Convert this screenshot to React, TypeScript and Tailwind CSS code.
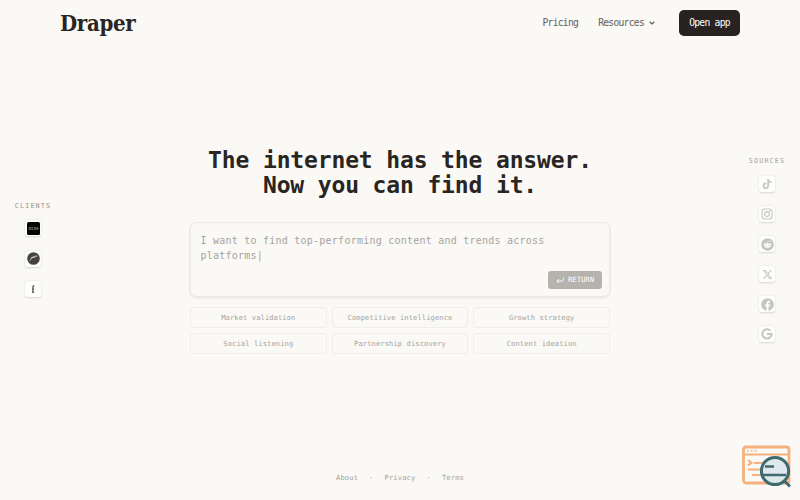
import type { ReactNode } from 'react'
import { ChevronDown } from 'lucide-react'
import { FaFacebook, FaReddit, FaTiktok } from 'react-icons/fa'
import { FaXTwitter } from 'react-icons/fa6'

const suggestions = [
  'Market validation',
  'Competitive intelligence',
  'Growth strategy',
  'Social listening',
  'Partnership discovery',
  'Content ideation',
]

function Tile({ children }: { children: ReactNode }) {
  return (
    <div className="flex h-4 w-4 items-center justify-center rounded-[3px] bg-[#fefefd] shadow-[0_0.5px_2px_rgba(40,35,30,0.16)]">
      {children}
    </div>
  )
}

function Header() {
  return (
    <header className="flex h-[46px] shrink-0 items-center justify-between px-[60px]">
      <div className="font-['DejaVu_Serif'] text-[22px] leading-none font-bold tracking-[-0.3px] [font-stretch:condensed]">
        Draper
      </div>
      <nav className="flex items-center text-[9.7px] tracking-[-0.74px] text-[#65615d]">
        <a className="mr-5">Pricing</a>
        <a className="mr-[23px] flex items-center gap-1">
          Resources
          <ChevronDown className="h-2 w-2" strokeWidth={3.5} />
        </a>
        <button className="h-[26px] w-[61px] rounded-[5px] bg-[#282320] text-white">Open app</button>
      </nav>
    </header>
  )
}

function Clients() {
  return (
    <aside className="flex w-[66px] flex-col items-center self-start pt-[155px]">
      <h2 className="text-[6.8px] leading-[10px] tracking-[1.1px] text-[#96938f]">CLIENTS</h2>
      <div className="mt-[9px] flex flex-col gap-[14.5px]">
        <Tile>
          <svg viewBox="0 0 26 26" className="h-[13px] w-[13px]">
            <rect width="26" height="26" rx="3" fill="#050505" />
            <path
              d="M4 11h4v4H4zM13 11h-3v4h3M15 15v-4h3v4zM20 15v-4l2 4v-4"
              fill="none"
              stroke="#aaa"
              strokeWidth="1"
            />
          </svg>
        </Tile>
        <Tile>
          <svg viewBox="0 0 26 26" className="h-[13px] w-[13px]">
            <circle cx="13" cy="13" r="12.6" fill="#444341" />
            <path d="M6 17C8 11 13 8 21 8M8 12l9-2" fill="none" stroke="#dddbd8" strokeWidth="1.6" />
          </svg>
        </Tile>
        <Tile>
          <svg viewBox="0 0 16 16" className="h-4 w-4" fill="none" stroke="#686765">
            <path d="M9.3 4.7H8.5L7.8 6.4v4.8h1.4M7.2 8h1.8" strokeWidth="1.4" />
          </svg>
        </Tile>
      </div>
    </aside>
  )
}

function Sources() {
  return (
    <aside className="flex w-[66px] flex-col items-center self-start pt-[110px] text-[#c6c4c1]">
      <h2 className="text-[6.8px] leading-[10px] tracking-[1.1px] text-[#a4a19d]">SOURCES</h2>
      <div className="mt-[10px] flex flex-col gap-[14px]">
        <Tile><FaTiktok className="h-[10px] w-[10px]" /></Tile>
        <Tile>
          <svg viewBox="0 0 24 24" className="h-3 w-3" fill="none" stroke="currentColor" strokeWidth="2.2">
            <rect x="2" y="2" width="20" height="20" rx="6" />
            <circle cx="12" cy="12" r="4.8" />
            <circle cx="17.6" cy="6.4" r=".5" />
          </svg>
        </Tile>
        <Tile><FaReddit className="h-[13px] w-[13px]" /></Tile>
        <Tile><FaXTwitter className="h-[11px] w-[11px]" /></Tile>
        <Tile><FaFacebook className="h-[13px] w-[13px]" /></Tile>
        <Tile>
          <svg viewBox="0 0 24 24" className="h-3 w-3" fill="none" stroke="currentColor" strokeWidth="4">
            <path d="M19 5.5A9.3 9.3 0 1 0 21.3 12H12" />
          </svg>
        </Tile>
      </div>
    </aside>
  )
}

function SearchPanel() {
  return (
    <section className="mt-[102px] w-[420px]">
      <h1 className="text-center text-[23px] leading-[25px] font-bold tracking-[-0.14px]">
        The internet has the answer.
        <br />
        Now you can find it.
      </h1>
      <div className="mt-[24px] flex h-[75px] flex-col justify-between rounded-[7px] border border-[#eceae6] px-[9.5px] pt-[10px] pb-[7px] shadow-[0_1px_1px_1px_rgba(60,50,40,0.06)]">
        <p className="text-[10px] leading-[15px] tracking-[0.235px] text-[#a6a39e]">
          I want to find top-performing content and trends across platforms|
        </p>
        <button className="mr-[-2.5px] flex h-[18px] w-[54px] items-center justify-center gap-1 self-end rounded-[3px] bg-[#b6b3af] text-[7.3px] tracking-[-0.05px] text-white">
          <svg viewBox="0 0 16 16" className="h-2 w-2" fill="none" stroke="currentColor" strokeWidth="1.8">
            <path d="M14.5 3v4q0 3-3 3H2M6 6 2 10l4 4" />
          </svg>
          RETURN
        </button>
      </div>
      <div className="mt-[10px] grid grid-cols-3 gap-[5px]">
        {suggestions.map((label) => (
          <button
            key={label}
            className="h-[21px] rounded-[3px] border border-[#f0eeea] pt-px text-[7.1px] tracking-[0.1px] text-[#a6a39e]"
          >
            {label}
          </button>
        ))}
      </div>
    </section>
  )
}

function SearchBadge() {
  return (
    <svg viewBox="0 0 50 44" className="absolute right-[9px] bottom-[12px] h-[44px] w-[50px]" fill="none">
      <rect x="2.5" y="3" width="45.5" height="36" rx="2.5" stroke="#f5b17e" strokeWidth="2.8" />
      <path d="M2 10.5h46" stroke="#f5b17e" strokeWidth="2" />
      <path d="M6 6.8h1.8M9.8 6.8h1.8M13.6 6.8h1.8" stroke="#f5b17e" strokeWidth="1.6" />
      <path d="m7 16 3.5 2.7L7 21.5M13 19h9M7 25.5h13M11 31h9" stroke="#f5b17e" strokeWidth="2.2" />
      <circle cx="34" cy="27" r="13.6" fill="#dfe8ec" stroke="#3e6a70" strokeWidth="3" />
      <path d="M24 22.5h9M22 31h23" stroke="#3e6a70" strokeWidth="2.3" />
      <path d="m43.5 37 5.5 5.5" stroke="#3e6a70" strokeWidth="3" />
    </svg>
  )
}

export default function App() {
  return (
    <div className="relative flex h-[500px] w-[800px] flex-col overflow-hidden bg-[#faf9f5] font-['DejaVu_Sans_Mono',monospace] text-[#282522]">
      <Header />
      <main className="flex min-h-0 flex-1 justify-between">
        <Clients />
        <SearchPanel />
        <Sources />
      </main>
      <footer className="flex h-[45px] shrink-0 items-center justify-center gap-[11px] pt-px text-[7.1px] tracking-[0.15px] text-[#a6a39e]">
        <a>About</a>
        <span>·</span>
        <a>Privacy</a>
        <span>·</span>
        <a>Terms</a>
      </footer>
      <SearchBadge />
    </div>
  )
}
